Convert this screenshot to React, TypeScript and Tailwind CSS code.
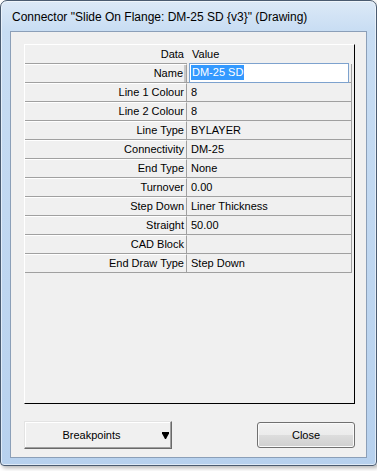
import React from "react";

const rows: [string, string][] = [
  ["Name", "DM-25 SD"],
  ["Line 1 Colour", "8"],
  ["Line 2 Colour", "8"],
  ["Line Type", "BYLAYER"],
  ["Connectivity", "DM-25"],
  ["End Type", "None"],
  ["Turnover", "0.00"],
  ["Step Down", "Liner Thickness"],
  ["Straight", "50.00"],
  ["CAD Block", ""],
  ["End Draw Type", "Step Down"],
];

export default function App() {
  return (
    <div
      className="w-[377px] h-[471px] bg-white overflow-hidden"
      style={{ fontFamily: '"Liberation Sans", Arial, sans-serif' }}
    >
      <div className="w-[377px] h-[466px] flex flex-col border border-[#4a5b70] rounded-t-[7px] rounded-b-[4px] bg-[linear-gradient(to_bottom,#dce9f7_0px,#c8ddf3_30px,#b7d1ee_100%)] shadow-[inset_0_0_0_1px_rgba(255,255,255,0.55),2px_2px_4px_rgba(0,0,0,0.3)]">
        <div className="h-[30px] pl-[11px] pt-[2px] flex items-center text-[12px] text-black whitespace-nowrap">
          Connector "Slide On Flange: DM-25 SD {"{v3}"}" (Drawing)
        </div>
        <div className="mx-[9px] h-[427px] border border-[#8b9fb8] bg-[#f0f0f0] flex flex-col text-[11px] text-black">
          <div className="ml-[13px] mt-[12px] w-[331px] h-[360px] border-t border-l border-white border-r border-b border-r-black border-b-black flex flex-col">
            <div className="flex h-[19px]">
              <div className="w-[162px] h-[19px] border-b border-[#a0a0a0] flex items-center justify-end pr-[3px]">
                Data
              </div>
              <div className="w-[165px] h-[18px] flex items-center pl-[5px]">Value</div>
            </div>
            {rows.map(([label, value], i) => (
              <div key={label} className="flex h-[19px]">
                <div
                  className={
                    i === 0
                      ? "w-[162px] h-[19px] border-b border-r border-[#a0a0a0] border-t border-t-white flex items-center justify-end pr-[1px] shadow-[inset_-2px_0_0_#c8c8c8]"
                      : "w-[162px] h-[19px] border-b border-r border-[#a0a0a0] border-t border-t-white flex items-center justify-end pr-[2px]"
                  }
                >
                  <span className={i === 0 ? "pr-[2px]" : ""}>{label}</span>
                </div>
                <div className="w-[165px] h-[19px] border-b border-r border-[#a0a0a0] flex items-center">
                  {i === 0 ? (
                    <div className="ml-[2px] -mt-px w-[160px] h-[20px] bg-white border border-[#7da2ce] flex items-center pl-[1px]">
                      <span className="bg-[#3399ff] text-white leading-[15px] px-px">{value}</span>
                    </div>
                  ) : (
                    <span className="pl-[4px]">{value}</span>
                  )}
                </div>
              </div>
            ))}
          </div>
          <div className="ml-[13px] mr-[11px] mt-[17px] flex justify-between items-start">
            <div className="w-[148px] h-[28px] border border-t-[#e3e3e3] border-l-[#e3e3e3] border-r-[#696969] border-b-[#696969] bg-[#f0f0f0] shadow-[inset_-1px_-1px_0_#a0a0a0,inset_1px_1px_0_#ffffff] flex items-center">
              <span className="w-[133px] text-center">Breakpoints</span>
              <svg width="7" height="7" viewBox="0 0 7 7" className="ml-[4px] mt-[1px]">
                <polygon points="0,0 7,0 7,1.5 4,7 3,7 0,1.5" fill="#000" />
              </svg>
            </div>
            <div className="mt-px w-[98px] h-[26px] rounded-[3px] border border-[#707070] bg-[linear-gradient(to_bottom,#f2f2f2_0%,#ebebeb_50%,#dddddd_50%,#cfcfcf_100%)] shadow-[inset_0_0_0_1px_#fafafa] flex items-center justify-center">
              Close
            </div>
          </div>
        </div>
      </div>
    </div>
  );
}
